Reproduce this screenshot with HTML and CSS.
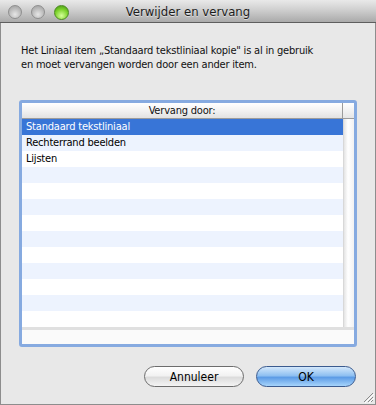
FILE: index.html
```html
<!DOCTYPE html>
<html lang="nl">
<head>
    <meta charset="UTF-8">
    <title>Verwijder en vervang</title>
    <link rel="stylesheet" href="styles.css">
</head>
<body>
    <div class="window">
        <div class="titlebar">
            <div class="lights">
                <span class="light"></span>
                <span class="light"></span>
                <span class="light green"></span>
            </div>
            <div class="title">Verwijder en vervang</div>
        </div>

        <div class="content">
            <p class="message">Het Liniaal item „Standaard tekstliniaal kopie" is al in gebruik<br>en moet vervangen worden door een ander item.</p>

            <div class="list-ring">
                <div class="list">
                    <div class="list-header">Vervang door:</div>
                    <div class="header-corner"></div>
                    <div class="rows">
                        <div class="row selected">Standaard tekstliniaal</div>
                        <div class="row">Rechterrand beelden</div>
                        <div class="row">Lijsten</div>
                        <div class="row"></div>
                        <div class="row"></div>
                        <div class="row"></div>
                        <div class="row"></div>
                        <div class="row"></div>
                        <div class="row"></div>
                        <div class="row"></div>
                        <div class="row"></div>
                        <div class="row"></div>
                        <div class="row"></div>
                    </div>
                    <div class="vscroll"></div>
                    <div class="hscroll"></div>
                </div>
            </div>

            <div class="buttons">
                <button class="btn">Annuleer</button>
                <button class="btn default">OK</button>
            </div>
        </div>

        <svg class="grip" width="12" height="12" viewBox="0 0 12 12">
            <path d="M11 2 L2 11 M11 6 L6 11 M11 9 L9 11" stroke="#8a8a8a" stroke-width="1"/>
            <path d="M12 3 L3 12 M12 7 L7 12" stroke="#ffffff" stroke-width="1"/>
        </svg>
    </div>
</body>
</html>
```

FILE: styles.css
```css
body{
    margin: 0;
    font-family: "DejaVu Sans Condensed", "DejaVu Sans", sans-serif;
    font-size: 11px;
    letter-spacing: -0.2px;
    color: #000;
}
.window{
    position: relative;
    width: 376px;
    height: 405px;
    box-sizing: border-box;
    border: 1px solid #8d8d8d;
    border-top: none;
    background-color: #e8e8e8;
    display: flex;
    flex-direction: column;
}
.titlebar{
    height: 22px;
    flex-shrink: 0;
    margin: 0 -1px;
    background: linear-gradient(#e9e9e9, #d2d2d2 40%, #aaaaaa);
    border-bottom: 1px solid #5e5e5e;
    display: flex;
    align-items: center;
    position: relative;
}
.lights{
    display: flex;
    gap: 9px;
    margin-left: 8px;
    margin-top: 2px;
}
.light{
    width: 12px;
    height: 12px;
    border-radius: 50%;
    background: radial-gradient(circle at 50% 70%, #e6e6e6, #b8b8b8 60%, #9c9c9c);
    border: 1px solid #8f8f8f;
}
.light.green{
    width: 13px;
    height: 13px;
    background: radial-gradient(circle at 50% 75%, #d6ff9a, #7cd22a 55%, #3f8f12);
    border-color: #4c8a22;
}
.title{
    position: absolute;
    left: 0;
    right: 0;
    text-align: center;
    font-size: 13px;
    letter-spacing: 0;
    color: #1c1c1c;
    text-shadow: 0 1px 0 rgba(255,255,255,0.5);
    margin-top: 1px;
}
.content{
    flex: 1;
    display: flex;
    flex-direction: column;
    padding: 0 19px 0 18px;
}
.message{
    margin: 21px 0 0 2px;
    line-height: 14px;
    color: #111;
    white-space: nowrap;
}
.list-ring{
    margin-top: 28px;
    width: 332px;
    height: 241px;
    border: 3px solid #86aae0;
    border-radius: 3px;
    box-shadow: inset 0 0 0 1px #6b93cf;
}
.list{
    height: 100%;
    display: grid;
    grid-template-columns: 1fr 11px;
    grid-template-rows: 16px 208px 1fr;
    background: #fff;
}
.list-header{
    background: linear-gradient(#ffffff, #f2f2f2 50%, #e2e2e2);
    border-bottom: 1px solid #9b9b9b;
    border-right: 1px solid #9b9b9b;
    text-align: center;
    line-height: 16px;
    box-sizing: border-box;
    color: #111;
}
.header-corner{
    background: linear-gradient(#ffffff, #e6e6e6);
    border-bottom: 1px solid #9b9b9b;
}
.rows{
    display: flex;
    flex-direction: column;
}
.row{
    height: 16px;
    line-height: 16px;
    padding-left: 4px;
    background: #fff;
}
.row:nth-child(even){
    background: #edf3fe;
}
.row.selected{
    background: #3875d7;
    color: #fff;
}
.vscroll{
    background: linear-gradient(90deg, #e4e4e4, #ffffff 40%, #f2f2f2);
    border-left: 1px solid #d8d8d8;
}
.hscroll{
    grid-column: 1 / 3;
    border-top: 3px solid #e0e0e0;
    background: #fafafa;
}
.buttons{
    display: flex;
    justify-content: flex-end;
    gap: 12px;
    margin-top: 19px;
}
.btn{
    width: 100px;
    height: 21px;
    border-radius: 11px;
    border: 1px solid #6d6d6d;
    background: linear-gradient(#ffffff, #f2f2f2 45%, #dcdcdc 55%, #f4f4f4);
    font-family: "DejaVu Sans Condensed", "DejaVu Sans", sans-serif;
    font-size: 12px;
    color: #000;
    padding: 0;
}
.btn.default{
    border-color: #3b5b8f;
    background: linear-gradient(#d4e8fb, #8fc0f1 45%, #5d9ce6 55%, #a6d4fb);
}
.grip{
    position: absolute;
    right: 1px;
    bottom: 1px;
}
```
